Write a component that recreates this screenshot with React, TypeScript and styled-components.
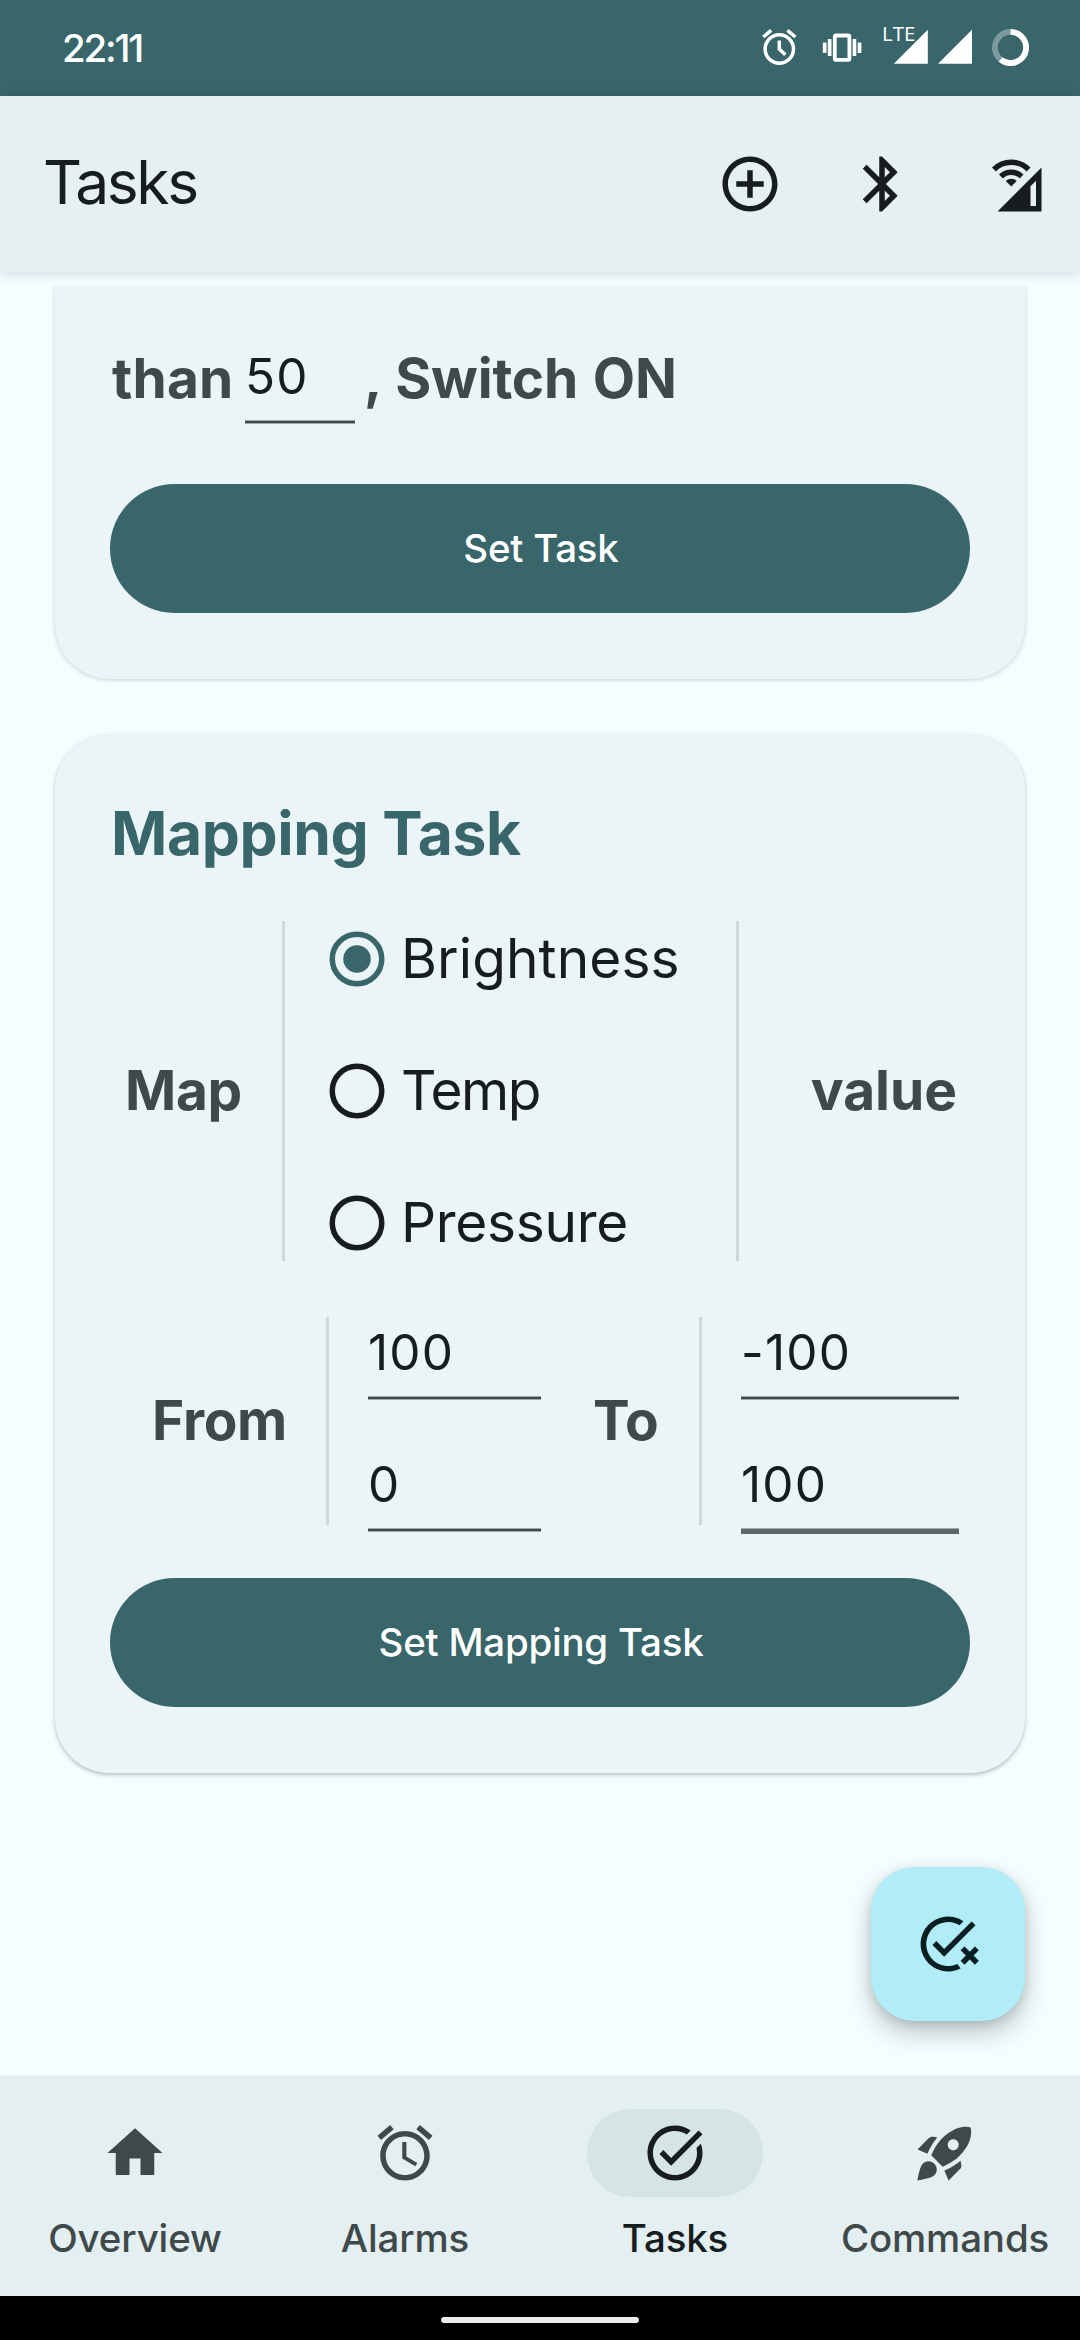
import React, { useState } from "react";
import styled, { createGlobalStyle } from "styled-components";

const color = {
  primary: "#38666b",
  background: "#f5fdff",
  toolbar: "#e6eff2",
  card: "#ebf4f6",
  nav: "#e3eff1",
  pill: "#d6e4e5",
  ink: "#171d1e",
  muted: "#3f494a",
  divider: "#cfd8da",
  fab: "#b0edf8",
};

const GlobalStyle = createGlobalStyle`
  *, *::before, *::after { box-sizing: border-box; }
  body {
    margin: 0;
    background: ${color.background};
    font-family: Inter, "Open Sans", sans-serif;
    color: ${color.ink};
  }
  button, input { font-family: inherit; }
`;

const Screen = styled.div`
  width: 1080px;
  height: 2340px;
  display: flex;
  flex-direction: column;
  overflow: hidden;
  background: ${color.background};
`;

/* ---------- status bar ---------- */

const StatusBar = styled.div`
  flex: none;
  height: 96px;
  padding: 0 51px 0 62px;
  display: flex;
  align-items: center;
  justify-content: space-between;
  background: ${color.primary};
  color: #fff;
`;

const Clock = styled.span`
  padding-bottom: 1px;
  font-size: 38.5px;
  font-weight: 550;
  line-height: 48px;
  letter-spacing: -2.2px;
`;

const StatusIcons = styled.div`
  display: flex;
  align-items: center;
`;

const StatusSvg = styled.svg<{ $gap?: number }>`
  display: block;
  height: 42px;
  margin-left: ${(p) => p.$gap ?? 0}px;
`;

const Signal = styled.div`
  position: relative;
  margin-left: 21px;
`;

const NetworkTag = styled.span`
  position: absolute;
  left: -1px;
  top: -6px;
  font-family: "Open Sans", sans-serif;
  font-size: 20.5px;
  line-height: 24px;
  letter-spacing: 0;
  font-weight: 500;
`;

/* ---------- toolbar ---------- */

const Toolbar = styled.header`
  flex: none;
  position: relative;
  height: 176px;
  padding: 0 33px 0 43px;
  display: flex;
  align-items: center;
  justify-content: space-between;
  background: ${color.toolbar};
  box-shadow: 0 2px 11px rgba(20, 30, 32, 0.16);
`;

const Title = styled.h1`
  margin: 0;
  padding-bottom: 4px;
  font-size: 60.5px;
  font-weight: 400;
  line-height: 72px;
  letter-spacing: -2.4px;
`;

const Actions = styled.div`
  display: flex;
  gap: 66px;
`;

const IconButton = styled.button`
  padding: 0;
  border: 0;
  background: none;
  color: ${color.ink};
`;

const Icon = styled.svg`
  display: block;
  width: 66px;
  height: 66px;
  fill: currentColor;
`;

/* ---------- content ---------- */

const Content = styled.main`
  flex: 1;
  min-height: 0;
  margin-top: 14px;
  padding: 0 55px 55px;
  display: flex;
  flex-direction: column;
  gap: 55px;
  overflow: hidden;
`;

const Card = styled.section<{ $cut?: boolean; $raised?: boolean }>`
  flex: none;
  padding: ${(p) => (p.$cut ? "55px" : "62px")} 55px 66px;
  display: flex;
  flex-direction: column;
  border-radius: ${(p) => (p.$cut ? "0 0 55px 55px" : "55px")};
  background: ${color.card};
  box-shadow: 0 ${(p) => (p.$raised ? 2 : 1)}px 4px
    rgba(20, 30, 32, ${(p) => (p.$raised ? 0.28 : 0.2)});
`;

const CardTitle = styled.h2`
  margin: 0 0 51px;
  padding-left: 1px;
  font-size: 60.5px;
  font-weight: 650;
  line-height: 74px;
  letter-spacing: -0.4px;
  color: ${color.primary};
`;

const Sentence = styled.div`
  height: 143px;
  display: flex;
  align-items: flex-start;
`;

const Label = styled.span<{ $spacing?: number; $width?: number; $indent?: number }>`
  min-width: ${(p) => (p.$width ? `${p.$width}px` : "auto")};
  padding: 0 0 2px ${(p) => p.$indent ?? 0}px;
  font-size: 55px;
  font-weight: 650;
  line-height: 74px;
  letter-spacing: ${(p) => p.$spacing ?? -0.3}px;
  word-spacing: 2px;
  color: ${color.muted};
  white-space: pre;
`;

const Field = styled.input<{ $width: number; $focused?: boolean }>`
  display: block;
  width: ${(p) => p.$width}px;
  height: 85px;
  padding: 0 0 15px;
  border: 0;
  outline: 0;
  font-size: 49.5px;
  font-weight: 400;
  line-height: 70px;
  letter-spacing: 1.2px;
  color: ${color.ink};
  background: ${(p) =>
    p.$focused
      ? "linear-gradient(#a3acad 0 1px, #5c6667 1px) 0 79px / 100% 6px no-repeat"
      : "linear-gradient(#a0a9aa 0 1px, #3f494a 1px 3px, #a0a9aa 3px) 0 79px / 100% 4px no-repeat"};
`;

const FilledButton = styled.button`
  flex: none;
  height: 129px;
  padding: 0 0 2px 2px;
  border: 0;
  border-radius: 65px;
  background: ${color.primary};
  color: #fff;
  font-size: 38.5px;
  font-weight: 500;
  line-height: 48px;
  letter-spacing: -0.25px;
`;

const SourceRow = styled.div`
  height: 340px;
  display: grid;
  grid-template-columns: 172px 3px 451px 3px 1fr;
  grid-template-rows: 340px;
  align-items: center;
`;

const Divider = styled.i`
  display: block;
  align-self: stretch;
  background: ${color.divider};
`;

const Cell = styled.div<{ $left?: number; $right?: number; $end?: boolean }>`
  display: flex;
  justify-content: ${(p) => (p.$end ? "flex-end" : "flex-start")};
  padding: 0 ${(p) => p.$right ?? 0}px 0 ${(p) => p.$left ?? 0}px;
`;

const RadioList = styled.div`
  padding-left: 39px;
  display: flex;
  flex-direction: column;
  gap: 66px;
`;

const RadioOption = styled.button`
  height: 66px;
  padding: 0;
  border: 0;
  background: none;
  display: flex;
  align-items: center;
  gap: 11px;
  color: ${color.ink};
`;

const RadioLabel = styled.span<{ $spacing: number }>`
  padding-bottom: 2px;
  font-size: 55px;
  font-weight: 400;
  line-height: 66px;
  letter-spacing: ${(p) => p.$spacing}px;
`;

const RadioIcon = styled(Icon)<{ $on: boolean }>`
  color: ${(p) => (p.$on ? color.primary : color.ink)};
`;

const RangeRow = styled.div`
  height: 208px;
  margin: 56px 0 53px;
  display: grid;
  grid-template-columns: 216px 3px 212px 158px 3px 1fr;
  grid-template-rows: 208px;
  align-items: center;
`;

const FieldStack = styled.div`
  align-self: start;
  padding-left: 39px;
  display: flex;
  flex-direction: column;
  gap: 47px;
`;

const Fab = styled.button`
  position: absolute;
  left: 871px;
  top: 1867px;
  width: 154px;
  height: 154px;
  padding: 0;
  border: 0;
  border-radius: 44px;
  display: grid;
  place-items: center;
  background: ${color.fab};
  color: #071f22;
  box-shadow: 0 12px 24px rgba(20, 30, 32, 0.25), 0 3px 10px rgba(20, 30, 32, 0.12);
`;

/* ---------- bottom navigation ---------- */

const NavBar = styled.nav`
  flex: none;
  height: 220px;
  padding-top: 33px;
  display: grid;
  grid-template-columns: repeat(4, 1fr);
  background: ${color.nav};
  box-shadow: 0 -1px 2px rgba(20, 30, 32, 0.05);
`;

const NavItem = styled.a<{ $active?: boolean }>`
  display: flex;
  flex-direction: column;
  align-items: center;
  color: ${(p) => (p.$active ? color.ink : color.muted)};
`;

const NavPill = styled.span<{ $active?: boolean }>`
  width: 176px;
  height: 88px;
  margin-bottom: 16px;
  border-radius: 44px;
  display: grid;
  place-items: center;
  background: ${(p) => (p.$active ? color.pill : "transparent")};
`;

const NavLabel = styled.span`
  font-size: 38.5px;
  font-weight: 500;
  line-height: 50px;
  letter-spacing: -0.15px;
`;

const GestureBar = styled.div`
  flex: none;
  height: 44px;
  display: grid;
  place-items: center;
  padding-top: 4px;
  background: #000;
`;

const GestureHandle = styled.i`
  width: 198px;
  height: 6px;
  border-radius: 3px;
  background: #ececec;
`;

const paths = {
  add: "M13 7h-2v4H7v2h4v4h2v-4h4v-2h-4V7zm-1-5C6.48 2 2 6.48 2 12s4.48 10 10 10 10-4.48 10-10S17.52 2 12 2zm0 18c-4.41 0-8-3.59-8-8s3.59-8 8-8 8 3.59 8 8-3.59 8-8 8z",
  bluetooth:
    "M17.71 7.71L12 2h-1v7.59L6.41 5 5 6.41 10.59 12 5 17.59 6.41 19 11 14.41V22h1l5.71-5.71-4.3-4.29 4.3-4.29zM13 5.83l1.88 1.88L13 9.59V5.83zm1.88 10.46L13 18.17v-3.76l1.88 1.88z",
  home: "M10 20v-6h4v6h5v-8h3L12 3 2 12h3v8z",
  alarm:
    "M22 5.72l-4.6-3.86-1.29 1.53 4.6 3.86L22 5.72zM7.88 3.39L6.6 1.86 2 5.71l1.29 1.53 4.59-3.85zM12.5 8H11v6l4.75 2.85.75-1.23-4-2.37V8zM12 4c-4.97 0-9 4.03-9 9s4.02 9 9 9c4.97 0 9-4.03 9-9s-4.03-9-9-9zm0 16c-3.87 0-7-3.13-7-7s3.13-7 7-7 7 3.13 7 7-3.13 7-7 7z",
  task: "M22 5.18L10.59 16.6l-4.24-4.24 1.41-1.41 2.83 2.83 10-10L22 5.18zm-2.21 5.04c.13.57.21 1.17.21 1.78 0 4.42-3.58 8-8 8s-8-3.58-8-8 3.58-8 8-8c1.58 0 3.04.46 4.28 1.25l1.44-1.44C16.1 2.67 14.13 2 12 2 6.48 2 2 6.48 2 12s4.48 10 10 10 10-4.48 10-10c0-1.19-.22-2.33-.6-3.39l-1.61 1.61z",
  rocket:
    "M9.19 6.35c-2.04 2.29-3.44 5.58-3.57 5.89L2 10.69l4.05-4.05c.47-.47 1.15-.68 1.81-.55l1.33.26zM11.17 17s3.74-1.55 5.89-3.7c5.4-5.4 4.5-9.62 4.21-10.57-.95-.3-5.17-1.19-10.57 4.21C8.55 9.09 7 12.83 7 12.83L11.17 17zm6.48-2.19c-2.29 2.04-5.58 3.44-5.89 3.57L13.31 22l4.05-4.05c.47-.47.68-1.15.55-1.81l-.26-1.33zM9 18c0 .83-.34 1.58-.88 2.12C6.94 21.3 2 22 2 22s.7-4.94 1.88-6.12C4.42 15.34 5.17 15 6 15c1.66 0 3 1.34 3 3zm4-9c0-1.1.9-2 2-2s2 .9 2 2-.9 2-2 2-2-.9-2-2z",
};

function PathIcon({ d }: { d: string }) {
  return (
    <Icon viewBox="0 0 24 24">
      <path d={d} />
    </Icon>
  );
}

function WifiCellIcon() {
  return (
    <Icon viewBox="0 0 24 24">
      <path fillRule="evenodd" d="M22 6v16H6zM20 10.83l-2 2V20h2z" />
      <path d="M4.71 6.71a8.9 8.9 0 0 1 12.58 0" fill="none" stroke="currentColor" strokeWidth="2" />
      <path d="M7.25 9.25a5.3 5.3 0 0 1 7.5 0" fill="none" stroke="currentColor" strokeWidth="2" />
      <path d="M11 12.9L9 10.95a2.8 2.8 0 0 1 4 0z" />
    </Icon>
  );
}

function TaskRemoveIcon() {
  return (
    <Icon viewBox="0 0 24 24">
      <path d="M17.6 3.7A10 10 0 1 0 16.6 20.9L15.4 19.3A8 8 0 1 1 16.2 5.15z" />
      <path d="M22 5.18L10.59 16.6l-4.24-4.24 1.41-1.41 2.83 2.83 10-10z" />
      <path d="M17.3 13.6l5.2 5.2M22.5 13.6l-5.2 5.2" fill="none" stroke="currentColor" strokeWidth="2" />
    </Icon>
  );
}

type RadioProps = { label: string; spacing: number; on: boolean; onPick: () => void };

function Radio({ label, spacing, on, onPick }: RadioProps) {
  return (
    <RadioOption onClick={onPick}>
      <RadioIcon viewBox="0 0 24 24" $on={on}>
        <circle cx="12" cy="12" r="9" fill="none" stroke="currentColor" strokeWidth="2" />
        {on && <circle cx="12" cy="12" r="5" />}
      </RadioIcon>
      <RadioLabel $spacing={spacing}>{label}</RadioLabel>
    </RadioOption>
  );
}

const sources = [
  { name: "Brightness", spacing: 0.1 },
  { name: "Temp", spacing: -1.6 },
  { name: "Pressure", spacing: -0.3 },
];

const tabs = [
  { label: "Overview", icon: paths.home },
  { label: "Alarms", icon: paths.alarm },
  { label: "Tasks", icon: paths.task, active: true },
  { label: "Commands", icon: paths.rocket },
];

export default function App() {
  const [source, setSource] = useState("Brightness");

  return (
    <Screen>
      <GlobalStyle />
      <StatusBar>
        <Clock>22:11</Clock>
        <StatusIcons>
          <StatusSvg width="42" viewBox="0 0 42 42" fill="none" stroke="#fff" strokeWidth="3.5">
            <circle cx="21.3" cy="22" r="14.2" />
            <path d="M21.3 13.5V22l6 5.8M5.2 10l8-6.6M29.4 3.4l8 6.6" />
          </StatusSvg>
          <StatusSvg width="40" viewBox="0 0 40 42" fill="#fff" $gap={22}>
            <rect x="12.8" y="8.5" width="14.6" height="24.4" rx="1.5" fill="none" stroke="#fff" strokeWidth="3.8" />
            <rect x="5.8" y="12" width="3.7" height="17" rx=".6" />
            <rect x=".8" y="15.5" width="3.7" height="10.6" rx=".6" />
            <rect x="30.6" y="12" width="3.7" height="17" rx=".6" />
            <rect x="35.7" y="15.5" width="3.7" height="10.6" rx=".6" />
          </StatusSvg>
          <Signal>
            <StatusSvg width="45" viewBox="0 0 45 42" fill="#fff">
              <path d="M44.8 2.7v34H10.8z" />
            </StatusSvg>
            <NetworkTag>LTE</NetworkTag>
          </Signal>
          <StatusSvg width="34" viewBox="0 0 34 42" fill="#fff" $gap={10}>
            <path d="M34 2.7v34H0z" />
          </StatusSvg>
          <StatusSvg width="37" viewBox="0 0 37 42" fill="none" stroke="#fff" strokeWidth="5.8" $gap={20}>
            <circle cx="18.5" cy="20.5" r="15.6" strokeOpacity=".34" />
            <circle
              cx="18.5"
              cy="20.5"
              r="15.6"
              pathLength="100"
              strokeDasharray="61 100"
              transform="rotate(-90 18.5 20.5)"
            />
          </StatusSvg>
        </StatusIcons>
      </StatusBar>

      <Toolbar>
        <Title>Tasks</Title>
        <Actions>
          <IconButton>
            <PathIcon d={paths.add} />
          </IconButton>
          <IconButton>
            <PathIcon d={paths.bluetooth} />
          </IconButton>
          <IconButton>
            <WifiCellIcon />
          </IconButton>
        </Actions>
      </Toolbar>

      <Content>
        <Card $cut>
          <Sentence>
            <Label $width={135} $indent={2} $spacing={0.2}>
              than
            </Label>
            <Field $width={110} defaultValue="50" />
            <Label $indent={9} $spacing={-0.2}>
              , Switch ON
            </Label>
          </Sentence>
          <FilledButton>Set Task</FilledButton>
        </Card>

        <Card $raised>
          <CardTitle>Mapping Task</CardTitle>
          <SourceRow>
            <Cell $left={15}>
              <Label>Map</Label>
            </Cell>
            <Divider />
            <RadioList>
              {sources.map(({ name, spacing }) => (
                <Radio
                  key={name}
                  label={name}
                  spacing={spacing}
                  on={name === source}
                  onPick={() => setSource(name)}
                />
              ))}
            </RadioList>
            <Divider />
            <Cell $end $right={13}>
              <Label $spacing={0}>value</Label>
            </Cell>
          </SourceRow>
          <RangeRow>
            <Cell $left={42}>
              <Label>From</Label>
            </Cell>
            <Divider />
            <FieldStack>
              <Field $width={173} defaultValue="100" />
              <Field $width={173} defaultValue="0" />
            </FieldStack>
            <Cell $left={52}>
              <Label>To</Label>
            </Cell>
            <Divider />
            <FieldStack>
              <Field $width={218} defaultValue="-100" />
              <Field $width={218} defaultValue="100" $focused />
            </FieldStack>
          </RangeRow>
          <FilledButton>Set Mapping Task</FilledButton>
        </Card>
      </Content>

      <Fab>
        <TaskRemoveIcon />
      </Fab>

      <NavBar>
        {tabs.map((tab) => (
          <NavItem key={tab.label} $active={tab.active}>
            <NavPill $active={tab.active}>
              <PathIcon d={tab.icon} />
            </NavPill>
            <NavLabel>{tab.label}</NavLabel>
          </NavItem>
        ))}
      </NavBar>
      <GestureBar>
        <GestureHandle />
      </GestureBar>
    </Screen>
  );
}
